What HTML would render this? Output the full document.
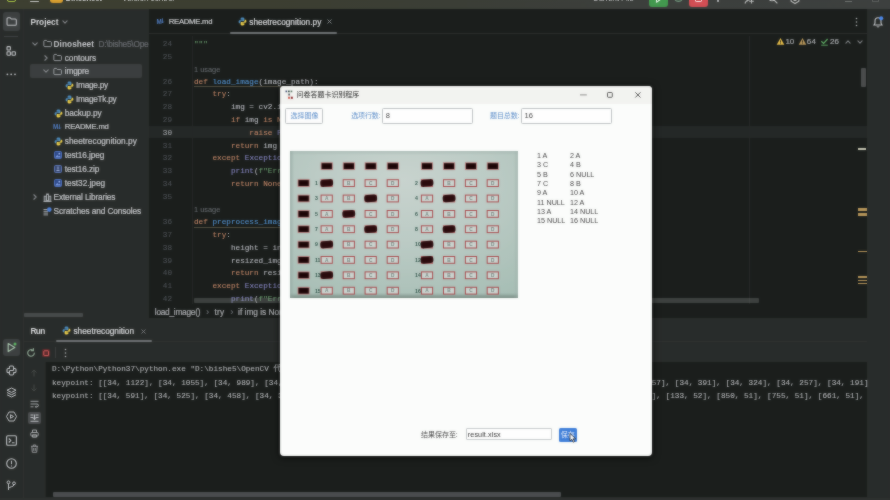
<!DOCTYPE html>
<html lang="zh"><head><meta charset="utf-8"><title>PyCharm</title>
<style>
*{box-sizing:border-box;margin:0;padding:0}
html,body{width:890px;height:500px;overflow:hidden;background:#1b1e1c;}
body{position:relative;font-family:"Liberation Sans","Noto Sans CJK SC",sans-serif;font-size:8.3px;color:#c9cbcd}
.abs{position:absolute}
.t{position:absolute;white-space:pre;line-height:12px;height:12px;-webkit-text-stroke:0.22px currentColor}
.mono{font-family:"Liberation Mono","Noto Sans CJK SC",monospace;font-size:7.7px;-webkit-text-stroke:0.08px currentColor}
svg{position:absolute;overflow:visible}
#root{position:absolute;left:0;top:0;width:890px;height:500px;overflow:hidden;background:#1b1e1c;filter:blur(0.5px)}
#soft{position:absolute;left:0;top:0;width:890px;height:500px;-webkit-backdrop-filter:blur(0.8px);backdrop-filter:blur(0.8px);opacity:0.5;pointer-events:none}
#topbar{left:0;top:0;width:890px;height:8.8px;background:linear-gradient(90deg,#3d3f31 0%,#3c3e31 30%,#3b3e36 50%,#3c3f3c 70%,#3d403f 100%);overflow:hidden}
#stripeL{left:0;top:8.6px;width:23px;height:491.4px;background:#292c2b}
#proj{left:23px;top:8.6px;width:126px;height:309.4px;background:#292c2b;overflow:hidden}
#editor{left:149px;top:8.6px;width:718px;height:309.4px;background:#1b1e1c;overflow:hidden}
#stripeR{left:867px;top:8.6px;width:23px;height:491.4px;background:#292c2b}
#run{left:23px;top:318px;width:844px;height:182px;background:#292c2b;overflow:hidden}
#console{left:46px;top:362px;width:821px;height:135px;background:#1b1e1c}
.kw{color:#c78a6a}.fn{color:#5596d6}.st{color:#6a9c6f}.cm{color:#666a6f}.ln{color:#4e5257}.bi{color:#8888c6}
</style></head>
<body>
<div id="root">
<div class="abs" id="stripeL"></div>
<div class="abs" id="proj"></div>
<div class="abs" id="editor"></div>
<div class="abs" id="run"></div>
<div class="abs" id="console"></div>
<div class="abs" id="stripeR"></div>
<div class="abs" id="topbar"></div>
<div class="abs" style="left:0;top:0;width:890px;height:8.8px;overflow:hidden"><div style="position:absolute;left:7px;top:-8px;width:9px;height:10px;border:1.3px solid #a6c044;border-radius:2px"></div><div style="position:absolute;left:29.5px;top:1.4px;width:9px;height:1.1px;background:#c4c6c4;border-radius:1px"></div><div style="position:absolute;left:50px;top:-8px;width:13px;height:11.4px;background:linear-gradient(180deg,#e8b040,#d49a2c);border-radius:3px"></div><div style="position:absolute;left:65.5px;top:-7.95px;line-height:12px;height:12px;white-space:pre;font-size:8.3px;font-weight:bold;color:#bfc1bf;letter-spacing:-0.457px">Dinosheet</div><div style="position:absolute;left:122px;top:-7.95px;line-height:12px;height:12px;white-space:pre;font-size:8.3px;font-weight:normal;color:#bfc1bf;letter-spacing:-0.193px">Version control</div><div style="position:absolute;left:592.6px;top:-7.95px;line-height:12px;height:12px;white-space:pre;font-size:8.3px;font-weight:normal;color:#b4b6b6;letter-spacing:-0.195px">Current File</div><div style="position:absolute;left:649.2px;top:-9px;width:18.4px;height:15.8px;background:#43994f;border-radius:3px"></div><svg style="left:655px;top:-4px" width="7" height="7"><path d="M1.5 0v6.200l4.500-3.100z" fill="none" stroke="#dff0e0" stroke-width="1.100" stroke-linejoin="round"/></svg><div style="position:absolute;left:673.5px;top:-6px;width:9px;height:8.300px;border:1.2px solid #6f8f78;border-radius:4.5px;background:#4a5f50"></div><div style="position:absolute;left:688.8px;top:-9px;width:18.9px;height:15.8px;background:#d24e54;border-radius:3px"></div><div style="position:absolute;left:694.5px;top:-5px;width:7.5px;height:7px;border:1.1px solid #f6e4e4;border-radius:1.2px"></div><div style="position:absolute;left:717px;top:0.3px;width:1.5px;height:1.5px;border-radius:1px;background:#c3c6c9"></div><svg style="left:744px;top:-6px" width="10" height="10"><g fill="none" stroke="#b8bab9" stroke-width="1.100"><circle cx="4" cy="4" r="2.200"/><path d="M1 9.500c.5-2 1.700-2.800 3-2.800M7.500 5v4.500M5.200 7.200h4.600"/></g></svg><svg style="left:768px;top:-6px" width="10" height="10"><g fill="none" stroke="#b8bab9" stroke-width="1.100" stroke-linecap="round"><circle cx="4" cy="3.800" r="3"/><path d="M6.200 6.200l2.800 2.800"/></g></svg><svg style="left:789.5px;top:-6.5px" width="10" height="10"><g fill="none" stroke="#b8bab9" stroke-width="1.100"><path d="M5 0.500l3.900 2.200v4.600L5 9.500 1.100 7.300V2.700z"/><circle cx="5" cy="5" r="1.500"/></g></svg><div style="position:absolute;left:845px;top:0.8px;width:7px;height:1px;background:#6e716f"></div><div style="position:absolute;left:872px;top:-4px;width:6.5px;height:6px;border:1px solid #5a5d5b"></div></div>
<div class="abs" style="left:2.7px;top:12.4px;width:17.5px;height:18.4px;background:#3d4041;border-radius:3px;"></div>
<svg style="left:5.9px;top:16.3px" width="11" height="11" viewBox="0 0 16 16"><path d="M1.500 4c0-.8.600-1.500 1.500-1.500h3l1.800 2h5.700c.8 0 1.500.7 1.500 1.500v6c0 .8-.7 1.500-1.500 1.500h-10.500c-.9 0-1.500-.7-1.500-1.500z" fill="none" stroke="#c3c6c9" stroke-width="1.500"/></svg>
<div class="abs" style="left:4px;top:36px;width:14px;height:1px;background:#3e4142;"></div>
<svg style="left:6px;top:46px" width="10" height="10" viewBox="0 0 10 10"><g fill="none" stroke="#c3c6c9" stroke-width="1.100"><rect x="1" y="0.600" width="3.400" height="3.400" rx="0.800"/><rect x="1" y="5.800" width="3.400" height="3.400" rx="0.800"/><rect x="6" y="5.800" width="3.400" height="3.400" rx="0.800"/></g></svg>
<svg style="left:6px;top:72px" width="10" height="4" viewBox="0 0 10 4"><g fill="#c3c6c9"><circle cx="1.400" cy="2.300" r="0.900"/><circle cx="5.200" cy="2.300" r="0.900"/><circle cx="9" cy="2.300" r="0.900"/></g></svg>
<div class="abs" style="left:23px;top:9px;width:1px;height:309px;background:#2c2f2e;"></div>
<div class="t" style="left:30.4px;top:16px;font-size:8.3px;font-weight:bold;-webkit-text-stroke:0;color:#d6d8da;letter-spacing:-0.02px;">Project</div>
<svg style="left:65.3px;top:22.3px" width="1" height="1"><path d="M-2.1 -1.05 L0 1.05 L2.1 -1.05" fill="none" stroke="#85888b" stroke-width="1.1" stroke-linecap="round" stroke-linejoin="round"/></svg>
<div class="abs" style="left:30.4px;top:64.4px;width:111.2px;height:13.6px;background:#3b3e3f;border-radius:2px;"></div>
<svg style="left:34.7px;top:43.6px" width="1" height="1"><path d="M-2.25 -1.125 L0 1.125 L2.25 -1.125" fill="none" stroke="#888b8f" stroke-width="1.1" stroke-linecap="round" stroke-linejoin="round"/></svg>
<svg style="left:42.7px;top:39.1px" width="9" height="9" viewBox="0 0 16 16"><path d="M1.500 4c0-.8.600-1.500 1.500-1.500h3l1.800 2h5.700c.8 0 1.500.7 1.500 1.500v6c0 .8-.7 1.500-1.500 1.500h-10.500c-.9 0-1.500-.7-1.500-1.500z" fill="none" stroke="#b0b4b8" stroke-width="1.500"/></svg>
<div class="t" style="left:53.6px;top:37.6px;font-size:8.3px;font-weight:bold;-webkit-text-stroke:0;color:#c3c5c8;letter-spacing:0.032px;">Dinosheet</div>
<svg style="left:45.6px;top:57.5px" width="1" height="1"><path d="M-1.125 -2.25 L1.125 0 L-1.125 2.25" fill="none" stroke="#888b8f" stroke-width="1.1" stroke-linecap="round" stroke-linejoin="round"/></svg>
<svg style="left:53.3px;top:53.0px" width="9" height="9" viewBox="0 0 16 16"><path d="M1.500 4c0-.8.600-1.500 1.500-1.500h3l1.800 2h5.700c.8 0 1.500.7 1.500 1.500v6c0 .8-.7 1.500-1.500 1.500h-10.500c-.9 0-1.500-.7-1.500-1.500z" fill="none" stroke="#b0b4b8" stroke-width="1.500"/></svg>
<div class="t" style="left:64.8px;top:51.5px;font-size:8.3px;color:#c3c5c8;letter-spacing:-0.079px;">contours</div>
<svg style="left:45.6px;top:71.1px" width="1" height="1"><path d="M-2.25 -1.125 L0 1.125 L2.25 -1.125" fill="none" stroke="#888b8f" stroke-width="1.1" stroke-linecap="round" stroke-linejoin="round"/></svg>
<svg style="left:53.3px;top:66.6px" width="9" height="9" viewBox="0 0 16 16"><path d="M1.500 4c0-.8.600-1.500 1.500-1.500h3l1.800 2h5.700c.8 0 1.500.7 1.500 1.500v6c0 .8-.7 1.500-1.500 1.500h-10.500c-.9 0-1.500-.7-1.500-1.500z" fill="none" stroke="#b0b4b8" stroke-width="1.500"/></svg>
<div class="t" style="left:64.8px;top:65.1px;font-size:8.3px;color:#c3c5c8;letter-spacing:-0.196px;">imgpre</div>
<svg style="left:64.9px;top:80.7px" width="9" height="9" viewBox="0 0 16 16"><path d="M7.8 1C5 1 4.6 2.2 4.6 3.2V5h3.6v.7H3C1.6 5.7 1 6.9 1 8.3c0 1.500.6 2.700 2 2.700h1.200V9.200c0-1.200 1-2.100 2.200-2.100h3.300c1 0 1.700-.8 1.700-1.800V3.200C11.400 1.800 10 1 7.800 1z" fill="#4b8bbe"/><path d="M8.200 15c2.800 0 3.200-1.200 3.200-2.200V11H7.800v-.7H13c1.400 0 2-1.200 2-2.600 0-1.500-.6-2.700-2-2.700h-1.200v1.800c0 1.200-1 2.100-2.200 2.100H6.300c-1 0-1.700.8-1.700 1.800v2.100C4.600 14.200 6 15 8.200 15z" fill="#f0d24a"/></svg>
<div class="t" style="left:76px;top:79.2px;font-size:8.3px;color:#c3c5c8;letter-spacing:-0.268px;">Image.py</div>
<svg style="left:64.9px;top:94.7px" width="9" height="9" viewBox="0 0 16 16"><path d="M7.8 1C5 1 4.6 2.2 4.6 3.2V5h3.6v.7H3C1.6 5.7 1 6.9 1 8.3c0 1.500.6 2.700 2 2.700h1.200V9.200c0-1.200 1-2.100 2.200-2.100h3.300c1 0 1.700-.8 1.700-1.800V3.200C11.400 1.800 10 1 7.800 1z" fill="#4b8bbe"/><path d="M8.200 15c2.800 0 3.200-1.200 3.200-2.200V11H7.800v-.7H13c1.400 0 2-1.200 2-2.600 0-1.500-.6-2.700-2-2.700h-1.200v1.800c0 1.200-1 2.100-2.200 2.100H6.300c-1 0-1.700.8-1.700 1.800v2.100C4.600 14.200 6 15 8.200 15z" fill="#f0d24a"/></svg>
<div class="t" style="left:76px;top:93.2px;font-size:8.3px;color:#c3c5c8;letter-spacing:-0.306px;">ImageTk.py</div>
<svg style="left:53.7px;top:108.7px" width="9" height="9" viewBox="0 0 16 16"><path d="M7.8 1C5 1 4.6 2.2 4.6 3.2V5h3.6v.7H3C1.6 5.7 1 6.9 1 8.3c0 1.500.6 2.700 2 2.700h1.200V9.200c0-1.200 1-2.100 2.200-2.100h3.300c1 0 1.700-.8 1.700-1.800V3.200C11.400 1.800 10 1 7.800 1z" fill="#4b8bbe"/><path d="M8.200 15c2.800 0 3.200-1.200 3.200-2.200V11H7.800v-.7H13c1.400 0 2-1.200 2-2.600 0-1.500-.6-2.700-2-2.700h-1.200v1.800c0 1.200-1 2.100-2.200 2.100H6.300c-1 0-1.700.8-1.700 1.800v2.100C4.600 14.200 6 15 8.200 15z" fill="#f0d24a"/></svg>
<div class="t" style="left:64.8px;top:107.2px;font-size:8.3px;color:#c3c5c8;letter-spacing:-0.114px;">backup.py</div>
<div class="t" style="left:53.0px;top:121.2px;font-size:6.3px;font-weight:bold;-webkit-text-stroke:0;color:#4f7cc0;">M</div>
<svg style="left:57.7px;top:124.10000000000001px" width="3" height="6" viewBox="0 0 3 6"><path d="M1.5 0.3v4.6M0.2 3.5l1.300 1.500 1.300-1.500" fill="none" stroke="#4f7cc0" stroke-width="0.800"/></svg>
<div class="t" style="left:64.8px;top:121.2px;font-size:7.7px;color:#c3c5c8;letter-spacing:-0.202px;">README.md</div>
<svg style="left:53.7px;top:136.7px" width="9" height="9" viewBox="0 0 16 16"><path d="M7.8 1C5 1 4.6 2.2 4.6 3.2V5h3.6v.7H3C1.6 5.7 1 6.9 1 8.3c0 1.500.6 2.700 2 2.700h1.200V9.200c0-1.200 1-2.100 2.200-2.100h3.300c1 0 1.700-.8 1.700-1.800V3.200C11.400 1.800 10 1 7.800 1z" fill="#4b8bbe"/><path d="M8.200 15c2.800 0 3.200-1.200 3.200-2.200V11H7.800v-.7H13c1.400 0 2-1.200 2-2.600 0-1.500-.6-2.700-2-2.700h-1.200v1.800c0 1.200-1 2.100-2.200 2.100H6.300c-1 0-1.700.8-1.700 1.800v2.100C4.600 14.200 6 15 8.200 15z" fill="#f0d24a"/></svg>
<div class="t" style="left:64.8px;top:135.2px;font-size:8.3px;color:#c3c5c8;letter-spacing:0.002px;">sheetrecognition.py</div>
<svg style="left:54.2px;top:151.2px" width="8" height="8" viewBox="0 0 8 8"><rect x="0.500" y="0.500" width="7" height="7" rx="1" fill="#2f4a8a" stroke="#4f74c8" stroke-width="0.900"/><circle cx="5.300" cy="2.700" r="0.900" fill="#9db6ee"/><path d="M1 6.500l2.200-2.500 1.600 1.600 1-.8 1.200 1.700z" fill="#7d9be0"/></svg>
<div class="t" style="left:64.8px;top:149.2px;font-size:8.3px;color:#c3c5c8;letter-spacing:-0.109px;">test16.jpeg</div>
<svg style="left:54.2px;top:165.2px" width="8" height="8" viewBox="0 0 8 8"><rect x="0.500" y="0.500" width="7" height="7" rx="1" fill="#3a4a72" stroke="#5f7cc0" stroke-width="0.900"/><path d="M4 1.500v3M2.500 5.500h3" stroke="#a8b8e0" stroke-width="0.900" fill="none"/></svg>
<div class="t" style="left:64.8px;top:163.2px;font-size:8.3px;color:#c3c5c8;letter-spacing:-0.092px;">test16.zip</div>
<svg style="left:54.2px;top:179.2px" width="8" height="8" viewBox="0 0 8 8"><rect x="0.500" y="0.500" width="7" height="7" rx="1" fill="#2f4a8a" stroke="#4f74c8" stroke-width="0.900"/><circle cx="5.300" cy="2.700" r="0.900" fill="#9db6ee"/><path d="M1 6.500l2.200-2.500 1.600 1.600 1-.8 1.200 1.700z" fill="#7d9be0"/></svg>
<div class="t" style="left:64.8px;top:177.2px;font-size:8.3px;color:#c3c5c8;letter-spacing:-0.027px;">test32.jpeg</div>
<svg style="left:34.7px;top:197.2px" width="1" height="1"><path d="M-1.125 -2.25 L1.125 0 L-1.125 2.25" fill="none" stroke="#888b8f" stroke-width="1.1" stroke-linecap="round" stroke-linejoin="round"/></svg>
<svg style="left:42.7px;top:192.7px" width="9" height="9" viewBox="0 0 9 9"><g fill="none" stroke="#b0b4b8" stroke-width="0.900"><path d="M0.500 8.500h8"/><rect x="1.200" y="3.200" width="1.800" height="5"/><rect x="3.600" y="1" width="1.800" height="7.200"/><rect x="6" y="3.200" width="1.800" height="5"/></g></svg>
<div class="t" style="left:53.6px;top:191.2px;font-size:8.3px;color:#c3c5c8;letter-spacing:-0.159px;">External Libraries</div>
<svg style="left:42.7px;top:206.7px" width="9" height="9" viewBox="0 0 9 9"><g><path d="M0.500 2.500h4.500M0.500 4.300h4.500M0.500 6.100h4.500M0.500 7.900h4.500" stroke="#a0a4a8" stroke-width="1"/><circle cx="6.300" cy="2.600" r="2.300" fill="#4c7fd6"/></g></svg>
<div class="t" style="left:53.6px;top:205.2px;font-size:8.3px;color:#c3c5c8;letter-spacing:-0.111px;">Scratches and Consoles</div>
<div class="t" style="left:98.4px;top:37.6px;font-size:8.3px;color:#686c70;letter-spacing:-0.234px;">D:\bishe5\Ope</div>
<div class="abs" style="left:149px;top:9px;width:10px;height:60px;background:#1b1e1c;"></div>
<div class="abs" style="left:24px;top:312.6px;width:59px;height:4.2px;background:#474a4b;border-radius:1px;"></div>
<div class="t" style="left:156.6px;top:15.5px;font-size:6.3px;font-weight:bold;-webkit-text-stroke:0;color:#4f7cc0;">M</div>
<svg style="left:161.3px;top:18.4px" width="3" height="6" viewBox="0 0 3 6"><path d="M1.5 0.3v4.6M0.2 3.5l1.300 1.500 1.300-1.500" fill="none" stroke="#4f7cc0" stroke-width="0.800"/></svg>
<div class="t" style="left:168.7px;top:15.5px;font-size:7.7px;color:#c9cbcd;letter-spacing:-0.235px;">README.md</div>
<svg style="left:238.0px;top:16.8px" width="9" height="9" viewBox="0 0 16 16"><path d="M7.8 1C5 1 4.6 2.2 4.6 3.2V5h3.6v.7H3C1.6 5.7 1 6.9 1 8.3c0 1.500.6 2.700 2 2.700h1.200V9.200c0-1.200 1-2.100 2.200-2.100h3.300c1 0 1.700-.8 1.700-1.800V3.200C11.400 1.800 10 1 7.800 1z" fill="#4b8bbe"/><path d="M8.200 15c2.800 0 3.200-1.200 3.200-2.200V11H7.800v-.7H13c1.400 0 2-1.200 2-2.600 0-1.500-.6-2.700-2-2.700h-1.200v1.800c0 1.200-1 2.100-2.200 2.100H6.300c-1 0-1.700.8-1.700 1.800v2.100C4.600 14.200 6 15 8.200 15z" fill="#f0d24a"/></svg>
<div class="t" style="left:249.3px;top:15.5px;font-size:8.3px;color:#d6d8da;letter-spacing:0.002px;">sheetrecognition.py</div>
<svg style="left:326.5px;top:19px" width="5" height="5" viewBox="0 0 5 5"><path d="M0.500 0.500l4 4M4.500 0.500l-4 4" stroke="#8b8e92" stroke-width="0.900" fill="none"/></svg>
<div class="abs" style="left:149px;top:32.6px;width:718px;height:1px;background:#2a2d2c;"></div>
<div class="abs" style="left:230px;top:31.6px;width:107px;height:2.2px;background:#6f7275;border-radius:1px;"></div>
<div class="abs" style="left:149px;top:126px;width:718px;height:12.4px;background:#242827;"></div>
<div class="abs" style="left:192px;top:36px;width:1px;height:268px;background:#242726;"></div>
<div class="abs" style="left:749px;top:36px;width:1px;height:268px;background:#262928;"></div>
<div class="t mono ln" style="left:150px;width:22px;text-align:right;top:38.11px;">24</div>
<div class="t mono" style="left:194px;top:38.11px;color:#bcbec4"><span class="st">"""</span></div>
<div class="t mono ln" style="left:150px;width:22px;text-align:right;top:50.74px;">25</div>
<div class="t mono" style="left:194px;top:63.82px;color:#bcbec4"><span class="cm" style="font-family:'Liberation Sans',sans-serif;font-size:7.4px">1 usage</span></div>
<div class="t mono ln" style="left:150px;width:22px;text-align:right;top:75.60px;">26</div>
<div class="t mono" style="left:194px;top:75.60px;color:#bcbec4"><span class="kw">def</span> <span class="fn">load_image</span>(image_path):</div>
<div class="t mono ln" style="left:150px;width:22px;text-align:right;top:88.38px;">27</div>
<div class="t mono" style="left:194px;top:88.38px;color:#bcbec4">    <span class="kw">try</span>:</div>
<div class="t mono ln" style="left:150px;width:22px;text-align:right;top:101.16px;">28</div>
<div class="t mono" style="left:194px;top:101.16px;color:#bcbec4">        img = cv2.imread(image_path)</div>
<div class="t mono ln" style="left:150px;width:22px;text-align:right;top:113.94px;">29</div>
<div class="t mono" style="left:194px;top:113.94px;color:#bcbec4">        <span class="kw">if</span> img <span class="kw">is</span> <span class="kw">None</span>:</div>
<div class="t mono ln" style="left:150px;width:22px;text-align:right;top:126.72px;color:#a3a6aa">30</div>
<div class="t mono" style="left:194px;top:126.72px;color:#bcbec4">            <span class="kw">raise</span> <span class="bi">FileNotFoundError</span></div>
<div class="t mono ln" style="left:150px;width:22px;text-align:right;top:139.50px;">31</div>
<div class="t mono" style="left:194px;top:139.50px;color:#bcbec4">        <span class="kw">return</span> img</div>
<div class="t mono ln" style="left:150px;width:22px;text-align:right;top:152.28px;">32</div>
<div class="t mono" style="left:194px;top:152.28px;color:#bcbec4">    <span class="kw">except</span> <span class="bi">Exception</span> <span class="kw">as</span> e:</div>
<div class="t mono ln" style="left:150px;width:22px;text-align:right;top:165.06px;">33</div>
<div class="t mono" style="left:194px;top:165.06px;color:#bcbec4">        <span class="bi">print</span>(<span class="st">f"Error loading image: </span></div>
<div class="t mono ln" style="left:150px;width:22px;text-align:right;top:177.84px;">34</div>
<div class="t mono" style="left:194px;top:177.84px;color:#bcbec4">        <span class="kw">return</span> <span class="kw">None</span></div>
<div class="t mono ln" style="left:150px;width:22px;text-align:right;top:190.62px;">35</div>
<div class="t mono" style="left:194px;top:203.80px;color:#bcbec4"><span class="cm" style="font-family:'Liberation Sans',sans-serif;font-size:7.4px">1 usage</span></div>
<div class="t mono ln" style="left:150px;width:22px;text-align:right;top:216.18px;">36</div>
<div class="t mono" style="left:194px;top:216.18px;color:#bcbec4"><span class="kw">def</span> <span class="fn">preprocess_image</span>(image):</div>
<div class="t mono ln" style="left:150px;width:22px;text-align:right;top:228.96px;">37</div>
<div class="t mono" style="left:194px;top:228.96px;color:#bcbec4">    <span class="kw">try</span>:</div>
<div class="t mono ln" style="left:150px;width:22px;text-align:right;top:241.74px;">38</div>
<div class="t mono" style="left:194px;top:241.74px;color:#bcbec4">        height = int(image.shape[0])</div>
<div class="t mono ln" style="left:150px;width:22px;text-align:right;top:254.52px;">39</div>
<div class="t mono" style="left:194px;top:254.52px;color:#bcbec4">        resized_img = cv2.resize(image)</div>
<div class="t mono ln" style="left:150px;width:22px;text-align:right;top:267.30px;">40</div>
<div class="t mono" style="left:194px;top:267.30px;color:#bcbec4">        <span class="kw">return</span> resized_img</div>
<div class="t mono ln" style="left:150px;width:22px;text-align:right;top:280.08px;">41</div>
<div class="t mono" style="left:194px;top:280.08px;color:#bcbec4">    <span class="kw">except</span> <span class="bi">Exception</span> <span class="kw">as</span> e:</div>
<div class="t mono ln" style="left:150px;width:22px;text-align:right;top:292.86px;">42</div>
<div class="t mono" style="left:194px;top:292.86px;color:#bcbec4">        <span class="bi">print</span>(<span class="st">f"Error preprocessing</span></div>
<div class="abs" style="left:194px;top:86.2px;width:124.5px;height:0.8px;background:rgba(150,140,110,0.45);"></div>
<div class="abs" style="left:194px;top:226.8px;width:120px;height:0.8px;background:rgba(150,140,110,0.45);"></div>
<div class="abs" style="left:149px;top:304px;width:718px;height:14px;background:#1b1e1c;"></div>
<div class="t" style="left:154.8px;top:305.7px;font-size:8.3px;color:#a9abae;letter-spacing:-0.253px;">load_image()</div>
<div class="t" style="left:206.3px;top:305.5px;font-size:8.3px;color:#6f7378;">›</div>
<div class="t" style="left:214.5px;top:305.7px;font-size:8.3px;color:#a9abae;letter-spacing:0.16px;">try</div>
<div class="t" style="left:230.6px;top:305.5px;font-size:8.3px;color:#6f7378;">›</div>
<div class="t" style="left:238.1px;top:305.7px;font-size:8.3px;color:#a9abae;">if img is None</div>
<div class="abs" style="left:194px;top:298px;width:564.5px;height:5.2px;background:rgba(150,158,155,0.28);border-radius:1px;"></div>
<div class="abs" style="left:861px;top:68px;width:5px;height:19px;background:#4a4d4d;border-radius:1px;"></div>
<svg style="left:776px;top:37.3px" width="9" height="9" viewBox="0 0 9 9"><path d="M4.500 1L8.300 7.800H0.700z" fill="#e8bf4a"/><path d="M4.500 3.400v2.300M4.500 6.400v.7" stroke="#2a2a1e" stroke-width="0.900"/></svg>
<div class="t" style="left:785.6px;top:36px;font-size:8px;color:#a6a9ac;letter-spacing:-0.353px;">10</div>
<svg style="left:797.5px;top:37.3px" width="9" height="9" viewBox="0 0 9 9"><path d="M4.500 1L8.300 7.800H0.700z" fill="#b9975a"/><path d="M4.500 3.400v2.300M4.500 6.400v.7" stroke="#2a2a1e" stroke-width="0.900"/></svg>
<div class="t" style="left:806.8px;top:36px;font-size:8px;color:#a6a9ac;letter-spacing:0.147px;">64</div>
<svg style="left:820px;top:37px" width="9" height="9" viewBox="0 0 9 9"><path d="M1.300 4.300l2.300 2.200 4-4.500" stroke="#5fad65" stroke-width="1.200" fill="none"/><path d="M1.200 8.200h6.600" stroke="#5fad65" stroke-width="0.900"/></svg>
<div class="t" style="left:830px;top:36px;font-size:8px;color:#a6a9ac;letter-spacing:0.147px;">26</div>
<svg style="left:847.5px;top:41.8px" width="1" height="1"><path d="M-2.1 1.05 L0 -1.05 L2.1 1.05" fill="none" stroke="#808386" stroke-width="1.1" stroke-linecap="round" stroke-linejoin="round"/></svg>
<svg style="left:860px;top:41.8px" width="1" height="1"><path d="M-2.1 -1.05 L0 1.05 L2.1 -1.05" fill="none" stroke="#808386" stroke-width="1.1" stroke-linecap="round" stroke-linejoin="round"/></svg>
<svg style="left:854.5px;top:16.5px" width="3" height="10" viewBox="0 0 3 10"><g fill="#b0b3b6"><circle cx="1.500" cy="1.500" r="0.800"/><circle cx="1.500" cy="5" r="0.800"/><circle cx="1.500" cy="8.500" r="0.800"/></g></svg>
<div class="abs" style="left:858px;top:208.4px;width:9px;height:2.6px;background:#b9975a;"></div>
<div class="abs" style="left:858px;top:212.8px;width:9px;height:3px;background:#b9975a;"></div>
<div class="abs" style="left:858px;top:250.8px;width:9px;height:1.3px;background:#b9975a;"></div>
<div class="abs" style="left:858px;top:276.4px;width:9px;height:1.3px;background:#b9975a;"></div>
<div class="abs" style="left:858px;top:279.6px;width:9px;height:1.3px;background:#b9975a;"></div>
<div class="abs" style="left:858px;top:282.8px;width:9px;height:1.3px;background:#b9975a;"></div>
<div class="abs" style="left:858px;top:148.4px;width:8.4px;height:1.3px;background:#c9c8b4;"></div>
<svg style="left:873px;top:16px" width="11" height="12" viewBox="0 0 11 12"><path d="M5 1.800c-1.900 0-3 1.400-3 3.200v2.200L1 9h8L8 7.200V5c0-1.800-1.100-3.200-3-3.200z" fill="none" stroke="#c3c6c9" stroke-width="1.100"/><path d="M4 10.300c.2.600.6.900 1 .900s.8-.3 1-.9" fill="none" stroke="#c3c6c9" stroke-width="1"/><circle cx="8.200" cy="2.300" r="2" fill="#4c8bf0"/></svg>
<div class="abs" style="left:23px;top:340.8px;width:844px;height:1px;background:#2f3231;"></div>
<div class="t" style="left:30.5px;top:324.5px;font-size:8.3px;font-weight:bold;-webkit-text-stroke:0;color:#d6d8da;letter-spacing:-0.714px;">Run</div>
<svg style="left:62.3px;top:325.8px" width="9" height="9" viewBox="0 0 16 16"><path d="M7.8 1C5 1 4.6 2.2 4.6 3.2V5h3.6v.7H3C1.6 5.7 1 6.9 1 8.3c0 1.500.6 2.700 2 2.700h1.200V9.200c0-1.200 1-2.100 2.200-2.100h3.300c1 0 1.700-.8 1.700-1.800V3.200C11.400 1.800 10 1 7.800 1z" fill="#4b8bbe"/><path d="M8.200 15c2.800 0 3.200-1.200 3.200-2.200V11H7.800v-.7H13c1.400 0 2-1.200 2-2.600 0-1.500-.6-2.700-2-2.700h-1.200v1.800c0 1.200-1 2.100-2.200 2.100H6.300c-1 0-1.700.8-1.700 1.800v2.100C4.600 14.200 6 15 8.200 15z" fill="#f0d24a"/></svg>
<div class="t" style="left:73.5px;top:324.5px;font-size:8.3px;color:#d6d8da;letter-spacing:-0.024px;">sheetrecognition</div>
<svg style="left:140.5px;top:328.5px" width="5" height="5" viewBox="0 0 5 5"><path d="M0.5 0.5l4 4M4.5 0.5l-4 4" stroke="#7b7e82" stroke-width="0.9" fill="none"/></svg>
<div class="abs" style="left:55.7px;top:340px;width:96px;height:2px;background:#6f7275;border-radius:1px;"></div>
<div class="abs" style="left:2.7px;top:338.8px;width:17.5px;height:17.2px;background:#3d4041;border-radius:3px;"></div>
<svg style="left:6px;top:342px" width="11" height="11" viewBox="0 0 11 11"><path d="M2.2 1.6v8l6.600-4z" fill="none" stroke="#a9c4ad" stroke-width="1.200" stroke-linejoin="round"/><circle cx="9" cy="2" r="1.500" fill="#5fb865"/></svg>
<svg style="left:6px;top:364.6px" width="11" height="11" viewBox="0 0 11 11"><g fill="none" stroke="#c3c6c9" stroke-width="1.05" stroke-linejoin="round" stroke-linecap="round"><path d="M3.4 2.2Q3.4 1 4.6 1H6.4Q7.6 1 7.6 2.2V3.4H8.8Q10 3.4 10 4.6V6.4Q10 7.6 8.8 7.6H7.6V8.8Q7.6 10 6.4 10H4.6Q3.4 10 3.4 8.8V7.6H2.2Q1 7.6 1 6.4V4.6Q1 3.4 2.2 3.4H3.4Z"/><path d="M3.4 7.6V6.5Q3.4 5.5 4.4 5.5H6.6Q7.6 5.5 7.6 4.5V3.4"/></g></svg>
<svg style="left:6px;top:387.4px" width="11" height="11" viewBox="0 0 11 11"><g fill="none" stroke="#c3c6c9" stroke-width="1" stroke-linejoin="round"><path d="M5.500 1L10 3.200 5.500 5.400 1 3.200z"/><path d="M1 5.500l4.500 2.200L10 5.500"/><path d="M1 7.800L5.500 10 10 7.800"/></g></svg>
<svg style="left:6px;top:411px" width="11" height="11" viewBox="0 0 11 11"><g fill="none" stroke="#c3c6c9" stroke-width="1" stroke-linejoin="round"><path d="M3 1h5l2.500 4.500L8 10H3L0.500 5.500z"/><path d="M4.500 3.700v3.600l3-1.800z"/></g></svg>
<svg style="left:6px;top:434.5px" width="11" height="11" viewBox="0 0 11 11"><g fill="none" stroke="#c3c6c9" stroke-width="1.100" stroke-linejoin="round"><rect x="0.600" y="0.800" width="9.800" height="9.400" rx="1.300"/><path d="M2.800 3.500l2 2-2 2M6 7.700h2.500"/></g></svg>
<svg style="left:6px;top:457.5px" width="11" height="11" viewBox="0 0 11 11"><g fill="none" stroke="#c3c6c9" stroke-width="1.100"><circle cx="5.500" cy="5.500" r="4.800"/><path d="M5.500 2.800v3.400M5.500 7.500v1"/></g></svg>
<svg style="left:6px;top:480.2px" width="11" height="11" viewBox="0 0 11 11"><g fill="none" stroke="#c3c6c9" stroke-width="1"><circle cx="2.500" cy="2.300" r="1.400"/><circle cx="8" cy="3.300" r="1.400"/><path d="M2.500 3.700v6.300M8 4.700c0 2.500-5.500 1.800-5.500 4"/></g></svg>
<div class="abs" style="left:23px;top:318px;width:1px;height:182px;background:#2e3130;"></div>
<svg style="left:25.6px;top:347.6px" width="10" height="10" viewBox="0 0 10 10"><g fill="none" stroke="#8fa894" stroke-width="1.200" stroke-linecap="round"><path d="M8.300 5a3.300 3.300 0 1 1-1.200-2.600"/><path d="M7.400 0.700v2h-2" stroke-linejoin="round"/></g></svg>
<div class="abs" style="left:42px;top:348.6px;width:8.4px;height:8.4px;background:#5a2a2c;border-radius:1.5px;"></div>
<svg style="left:42px;top:348.6px" width="8.4" height="8.4" viewBox="0 0 8.4 8.4"><rect x="1.800" y="1.800" width="4.800" height="4.800" rx="0.600" fill="none" stroke="#d8605e" stroke-width="1"/></svg>
<div class="abs" style="left:55.3px;top:347px;width:1px;height:11px;background:#3a3d3d;"></div>
<svg style="left:63.5px;top:347.5px" width="3" height="10" viewBox="0 0 3 10"><g fill="#b0b3b6"><circle cx="1.500" cy="1.500" r="0.800"/><circle cx="1.500" cy="5" r="0.800"/><circle cx="1.500" cy="8.500" r="0.800"/></g></svg>
<svg style="left:30.3px;top:368.7px" width="8" height="8" viewBox="0 0 8 8"><path d="M4 7.500v-6.500M1.500 3.500l2.500-2.500 2.500 2.500" fill="none" stroke="#454847" stroke-width="1" stroke-linejoin="round"/></svg>
<svg style="left:30.3px;top:383.7px" width="8" height="8" viewBox="0 0 8 8"><path d="M4 0.500v6.500M1.500 4.500l2.500 2.500 2.500-2.500" fill="none" stroke="#454847" stroke-width="1" stroke-linejoin="round"/></svg>
<svg style="left:29.8px;top:399.5px" width="9" height="8" viewBox="0 0 9 8"><g fill="none" stroke="#b0b3b6" stroke-width="0.900"><path d="M0.500 1.300h8M0.500 4h6.500a1.400 1.400 0 0 1 0 2.800h-1.500M0.500 6.800h3"/><path d="M6.300 5.800l-1 1 1 1"/></g></svg>
<div class="abs" style="left:28px;top:411.6px;width:13px;height:12.7px;background:#4a4d4e;border-radius:2px;"></div>
<svg style="left:29.8px;top:414px" width="9" height="8" viewBox="0 0 9 8"><g fill="none" stroke="#c9cccf" stroke-width="0.900"><path d="M0.500 1h3M5.500 1h3M0.500 3.500h3M5.500 3.500h3M0.500 7.300h8M4.500 0.500v5M3 4.200l1.500 1.500 1.500-1.500"/></g></svg>
<svg style="left:29.8px;top:429px" width="9" height="9" viewBox="0 0 9 9"><g fill="none" stroke="#b0b3b6" stroke-width="0.900" stroke-linejoin="round"><path d="M2.500 3.500v-2.500h4v2.500"/><rect x="0.800" y="3.500" width="7.400" height="3.500" rx="0.800"/><path d="M2.500 5.800h4v2.400h-4z"/></g></svg>
<svg style="left:29.8px;top:443.8px" width="9" height="9" viewBox="0 0 9 9"><g fill="none" stroke="#a0a3a6" stroke-width="0.900" stroke-linejoin="round"><path d="M1 2.300h7M3.300 2.300v-1.300h2.400v1.300M1.800 2.300l.5 6h4.400l.5-6M3.700 4v2.800M5.300 4v2.800"/></g></svg>
<div class="abs" style="left:45px;top:362px;width:1px;height:135px;background:#252827;"></div>
<div class="t mono" style="left:52px;top:363.3px;color:#b8babd">D:\Python\Python37\python.exe "D:\bishe5\OpenCV 代码\Dinosheet\sheetrecognition.py"</div>
<div class="t mono" style="left:52px;top:376.6px;color:#b8babd">keypoint: [[34, 1122], [34, 1055], [34, 989], [34, 922], [34, 1856], [34, 790], [34, 723], [34, 657], [34, 591], [34, 525], [34, 457], [34, 391], [34, 324], [34, 257], [34, 191]</div>
<div class="t mono" style="left:52px;top:389.6px;color:#b8babd">keypoint: [[34, 591], [34, 525], [34, 458], [34, 391], [34, 324], [34, 257], [34, 191], [34, 124], [134, 57], [1229, 52], [133, 52], [133, 52], [850, 51], [755, 51], [661, 51],</div>
<div class="abs" style="left:52.7px;top:492px;width:508px;height:5px;background:#4a4d4e;border-radius:1px;"></div>
<div class="abs" style="left:0px;top:497.5px;width:890px;height:2.5px;background:#2d302f;"></div>
<div class="abs" id="dlg" style="left:280.2px;top:86.4px;width:371.6px;height:369.8px;background:#fbfcfb;border-radius:4px;box-shadow:0 1px 7px 1px rgba(0,0,0,0.55)"></div>
<div class="abs" style="left:280.2px;top:86.4px;width:371.6px;height:17.2px;background:#f2f3f0;border-radius:4px 4px 0 0;"></div>
<svg style="left:284.9px;top:90.3px" width="9" height="9.5" viewBox="0 0 8 8.5"><g><rect x="0.4" y="0.5" width="1.5" height="1.5" fill="#3c4a6e"/><rect x="2.7" y="0.5" width="1.5" height="1.5" fill="#2e4a3e"/><rect x="5" y="0.5" width="1.5" height="1.5" fill="#55705f"/><rect x="2.9" y="3.2" width="1.5" height="1.7" fill="#4c5258"/><rect x="2.7" y="6" width="1.7" height="1.9" fill="#cf5a4e"/><rect x="5.2" y="6" width="1.8" height="1.9" fill="#8c2a2c"/></g></svg>
<div class="t" style="left:296.6px;top:88.8px;font-size:7px;color:#2a2a2a;font-family:'Liberation Sans','Noto Sans CJK SC',sans-serif;letter-spacing:-0.033px;-webkit-text-stroke:0;">问卷答题卡识别程序</div>
<svg style="left:579.8px;top:92px" width="7" height="6" viewBox="0 0 7 6"><path d="M0 2.900h6.800" stroke="#444" stroke-width="0.600"/></svg>
<svg style="left:607.2px;top:92.1px" width="6" height="6" viewBox="0 0 6 6"><rect x="0.500" y="0.500" width="4.800" height="4.800" rx="0.800" fill="none" stroke="#333" stroke-width="0.800"/></svg>
<svg style="left:634.6px;top:92.1px" width="6" height="6" viewBox="0 0 6 6"><path d="M0.300 0.300l5.200 5.200M5.500 0.300l-5.200 5.200" stroke="#333" stroke-width="0.800" fill="none"/></svg>
<div class="abs" style="left:285.2px;top:108.2px;width:38.2px;height:15.7px;background:#fdfdfd;border-radius:1.5px;border:1px solid #bcc1c2;"></div>
<div class="t" style="left:290.5px;top:110px;font-size:7px;color:#5e8fca;font-family:'Liberation Sans','Noto Sans CJK SC',sans-serif;letter-spacing:0.0px;-webkit-text-stroke:0;">选择图像</div>
<div class="t" style="left:351.2px;top:110px;font-size:7px;color:#5e8fca;font-family:'Liberation Sans','Noto Sans CJK SC',sans-serif;letter-spacing:-0.111px;-webkit-text-stroke:0;">选项行数:</div>
<div class="abs" style="left:382.2px;top:108.2px;width:90.4px;height:15.7px;background:#fefefe;border-radius:1.5px;border:1px solid #bcc1c2;"></div>
<div class="t" style="left:385.8px;top:110.2px;font-size:7.5px;color:#444;-webkit-text-stroke:0;">8</div>
<div class="t" style="left:490px;top:110px;font-size:7px;color:#5e8fca;font-family:'Liberation Sans','Noto Sans CJK SC',sans-serif;letter-spacing:-0.111px;-webkit-text-stroke:0;">题目总数:</div>
<div class="abs" style="left:521.2px;top:108.2px;width:90.6px;height:15.7px;background:#fefefe;border-radius:1.5px;border:1px solid #bcc1c2;"></div>
<div class="t" style="left:524.6px;top:110.2px;font-size:7.5px;color:#444;-webkit-text-stroke:0;">16</div>
<svg style="left:290.1px;top:151px;overflow:hidden" width="227.9" height="147.3" viewBox="0 0 227.9 147.3"><defs><radialGradient id="shg" cx="0.5" cy="0.25" r="0.85" fx="0.5" fy="0.2"><stop offset="0" stop-color="#c8d3ce"/><stop offset="0.450" stop-color="#bccbc5"/><stop offset="1" stop-color="#a7beb5"/></radialGradient><linearGradient id="shv" x1="0" y1="0" x2="0" y2="1"><stop offset="0" stop-color="#8fa39c" stop-opacity="0.450"/><stop offset="0.030" stop-color="#a8b8b4" stop-opacity="0"/><stop offset="0.960" stop-color="#8a9e96" stop-opacity="0"/><stop offset="1" stop-color="#55685f" stop-opacity="0.750"/></linearGradient><linearGradient id="shh" x1="0" y1="0" x2="1" y2="0"><stop offset="0" stop-color="#7f958d" stop-opacity="0.600"/><stop offset="0.020" stop-color="#a8b8b4" stop-opacity="0"/><stop offset="0.980" stop-color="#a8b8b4" stop-opacity="0"/><stop offset="1" stop-color="#8fa39c" stop-opacity="0.500"/></linearGradient></defs><rect x="0" y="0" width="227.9" height="147.3" fill="url(#shg)"/><rect x="0" y="0" width="227.9" height="147.3" fill="url(#shv)"/><rect x="0" y="0" width="227.9" height="147.3" fill="url(#shh)"/><rect x="31.10" y="11.80" width="11.200" height="6.800" fill="#1c0506" stroke="#c98a8a" stroke-width="0.800"/><rect x="53.20" y="11.80" width="11.200" height="6.800" fill="#1c0506" stroke="#c98a8a" stroke-width="0.800"/><rect x="75.10" y="11.80" width="11.200" height="6.800" fill="#1c0506" stroke="#c98a8a" stroke-width="0.800"/><rect x="97.20" y="11.80" width="11.200" height="6.800" fill="#1c0506" stroke="#c98a8a" stroke-width="0.800"/><rect x="131.40" y="11.80" width="11.200" height="6.800" fill="#1c0506" stroke="#c98a8a" stroke-width="0.800"/><rect x="153.50" y="11.80" width="11.200" height="6.800" fill="#1c0506" stroke="#c98a8a" stroke-width="0.800"/><rect x="175.40" y="11.80" width="11.200" height="6.800" fill="#1c0506" stroke="#c98a8a" stroke-width="0.800"/><rect x="197.20" y="11.80" width="11.200" height="6.800" fill="#1c0506" stroke="#c98a8a" stroke-width="0.800"/><rect x="8.00" y="28.70" width="11.200" height="6.800" fill="#1c0506" stroke="#c98a8a" stroke-width="0.800"/><rect x="8.00" y="44.10" width="11.200" height="6.800" fill="#1c0506" stroke="#c98a8a" stroke-width="0.800"/><rect x="8.00" y="59.50" width="11.200" height="6.800" fill="#1c0506" stroke="#c98a8a" stroke-width="0.800"/><rect x="8.00" y="74.80" width="11.200" height="6.800" fill="#1c0506" stroke="#c98a8a" stroke-width="0.800"/><rect x="8.00" y="90.20" width="11.200" height="6.800" fill="#1c0506" stroke="#c98a8a" stroke-width="0.800"/><rect x="8.00" y="105.50" width="11.200" height="6.800" fill="#1c0506" stroke="#c98a8a" stroke-width="0.800"/><rect x="8.00" y="120.90" width="11.200" height="6.800" fill="#1c0506" stroke="#c98a8a" stroke-width="0.800"/><rect x="8.00" y="136.30" width="11.200" height="6.800" fill="#1c0506" stroke="#c98a8a" stroke-width="0.800"/><rect x="31.10" y="28.70" width="11.200" height="6.800" fill="none" stroke="#b55a5c" stroke-width="0.900"/><rect x="30.30" y="28.40" width="12.800" height="7.200" rx="3.200" ry="3" fill="#2a0b0d" transform="rotate(-5 36.70 32.10)"/><rect x="53.20" y="28.70" width="11.200" height="6.800" fill="#cbd5d0" stroke="#a84a4d" stroke-width="1"/><text x="58.80" y="33.80" font-size="4.800" text-anchor="middle" font-weight="bold" fill="#7a8783" font-family="Liberation Sans, sans-serif">B</text><rect x="75.10" y="28.70" width="11.200" height="6.800" fill="#cbd5d0" stroke="#a84a4d" stroke-width="1"/><text x="80.70" y="33.80" font-size="4.800" text-anchor="middle" font-weight="bold" fill="#7a8783" font-family="Liberation Sans, sans-serif">C</text><rect x="97.20" y="28.70" width="11.200" height="6.800" fill="#cbd5d0" stroke="#a84a4d" stroke-width="1"/><text x="102.80" y="33.80" font-size="4.800" text-anchor="middle" font-weight="bold" fill="#7a8783" font-family="Liberation Sans, sans-serif">D</text><rect x="131.40" y="28.70" width="11.200" height="6.800" fill="none" stroke="#b55a5c" stroke-width="0.900"/><rect x="130.60" y="28.40" width="12.800" height="7.200" rx="3.200" ry="3" fill="#2a0b0d" transform="rotate(-5 137.00 32.10)"/><rect x="153.50" y="28.70" width="11.200" height="6.800" fill="#cbd5d0" stroke="#a84a4d" stroke-width="1"/><text x="159.10" y="33.80" font-size="4.800" text-anchor="middle" font-weight="bold" fill="#7a8783" font-family="Liberation Sans, sans-serif">B</text><rect x="175.40" y="28.70" width="11.200" height="6.800" fill="#cbd5d0" stroke="#a84a4d" stroke-width="1"/><text x="181.00" y="33.80" font-size="4.800" text-anchor="middle" font-weight="bold" fill="#7a8783" font-family="Liberation Sans, sans-serif">C</text><rect x="197.20" y="28.70" width="11.200" height="6.800" fill="#cbd5d0" stroke="#a84a4d" stroke-width="1"/><text x="202.80" y="33.80" font-size="4.800" text-anchor="middle" font-weight="bold" fill="#7a8783" font-family="Liberation Sans, sans-serif">D</text><text x="24.90" y="34.00" font-size="5.200" font-weight="bold" fill="#35584e" font-family="Liberation Sans, sans-serif">1</text><text x="125.10" y="34.00" font-size="5.200" font-weight="bold" fill="#35584e" font-family="Liberation Sans, sans-serif">2</text><rect x="31.10" y="44.10" width="11.200" height="6.800" fill="#cbd5d0" stroke="#a84a4d" stroke-width="1"/><text x="36.70" y="49.20" font-size="4.800" text-anchor="middle" font-weight="bold" fill="#7a8783" font-family="Liberation Sans, sans-serif">A</text><rect x="53.20" y="44.10" width="11.200" height="6.800" fill="#cbd5d0" stroke="#a84a4d" stroke-width="1"/><text x="58.80" y="49.20" font-size="4.800" text-anchor="middle" font-weight="bold" fill="#7a8783" font-family="Liberation Sans, sans-serif">B</text><rect x="75.10" y="44.10" width="11.200" height="6.800" fill="none" stroke="#b55a5c" stroke-width="0.900"/><rect x="74.30" y="43.80" width="12.800" height="7.200" rx="3.200" ry="3" fill="#2a0b0d" transform="rotate(-5 80.70 47.50)"/><rect x="97.20" y="44.10" width="11.200" height="6.800" fill="#cbd5d0" stroke="#a84a4d" stroke-width="1"/><text x="102.80" y="49.20" font-size="4.800" text-anchor="middle" font-weight="bold" fill="#7a8783" font-family="Liberation Sans, sans-serif">D</text><rect x="131.40" y="44.10" width="11.200" height="6.800" fill="#cbd5d0" stroke="#a84a4d" stroke-width="1"/><text x="137.00" y="49.20" font-size="4.800" text-anchor="middle" font-weight="bold" fill="#7a8783" font-family="Liberation Sans, sans-serif">A</text><rect x="153.50" y="44.10" width="11.200" height="6.800" fill="none" stroke="#b55a5c" stroke-width="0.900"/><rect x="152.70" y="43.80" width="12.800" height="7.200" rx="3.200" ry="3" fill="#2a0b0d" transform="rotate(-5 159.10 47.50)"/><rect x="175.40" y="44.10" width="11.200" height="6.800" fill="#cbd5d0" stroke="#a84a4d" stroke-width="1"/><text x="181.00" y="49.20" font-size="4.800" text-anchor="middle" font-weight="bold" fill="#7a8783" font-family="Liberation Sans, sans-serif">C</text><rect x="197.20" y="44.10" width="11.200" height="6.800" fill="#cbd5d0" stroke="#a84a4d" stroke-width="1"/><text x="202.80" y="49.20" font-size="4.800" text-anchor="middle" font-weight="bold" fill="#7a8783" font-family="Liberation Sans, sans-serif">D</text><text x="24.90" y="49.40" font-size="5.200" font-weight="bold" fill="#35584e" font-family="Liberation Sans, sans-serif">3</text><text x="125.10" y="49.40" font-size="5.200" font-weight="bold" fill="#35584e" font-family="Liberation Sans, sans-serif">4</text><rect x="31.10" y="59.50" width="11.200" height="6.800" fill="#cbd5d0" stroke="#a84a4d" stroke-width="1"/><text x="36.70" y="64.60" font-size="4.800" text-anchor="middle" font-weight="bold" fill="#7a8783" font-family="Liberation Sans, sans-serif">A</text><rect x="53.20" y="59.50" width="11.200" height="6.800" fill="none" stroke="#b55a5c" stroke-width="0.900"/><rect x="52.40" y="59.20" width="12.800" height="7.200" rx="3.200" ry="3" fill="#2a0b0d" transform="rotate(-5 58.80 62.90)"/><rect x="75.10" y="59.50" width="11.200" height="6.800" fill="#cbd5d0" stroke="#a84a4d" stroke-width="1"/><text x="80.70" y="64.60" font-size="4.800" text-anchor="middle" font-weight="bold" fill="#7a8783" font-family="Liberation Sans, sans-serif">C</text><rect x="97.20" y="59.50" width="11.200" height="6.800" fill="#cbd5d0" stroke="#a84a4d" stroke-width="1"/><text x="102.80" y="64.60" font-size="4.800" text-anchor="middle" font-weight="bold" fill="#7a8783" font-family="Liberation Sans, sans-serif">D</text><rect x="131.40" y="59.50" width="11.200" height="6.800" fill="#cbd5d0" stroke="#a84a4d" stroke-width="1"/><text x="137.00" y="64.60" font-size="4.800" text-anchor="middle" font-weight="bold" fill="#7a8783" font-family="Liberation Sans, sans-serif">A</text><rect x="153.50" y="59.50" width="11.200" height="6.800" fill="#cbd5d0" stroke="#a84a4d" stroke-width="1"/><text x="159.10" y="64.60" font-size="4.800" text-anchor="middle" font-weight="bold" fill="#7a8783" font-family="Liberation Sans, sans-serif">B</text><rect x="175.40" y="59.50" width="11.200" height="6.800" fill="#cbd5d0" stroke="#a84a4d" stroke-width="1"/><text x="181.00" y="64.60" font-size="4.800" text-anchor="middle" font-weight="bold" fill="#7a8783" font-family="Liberation Sans, sans-serif">C</text><rect x="197.20" y="59.50" width="11.200" height="6.800" fill="#cbd5d0" stroke="#a84a4d" stroke-width="1"/><text x="202.80" y="64.60" font-size="4.800" text-anchor="middle" font-weight="bold" fill="#7a8783" font-family="Liberation Sans, sans-serif">D</text><text x="24.90" y="64.80" font-size="5.200" font-weight="bold" fill="#35584e" font-family="Liberation Sans, sans-serif">5</text><text x="125.10" y="64.80" font-size="5.200" font-weight="bold" fill="#35584e" font-family="Liberation Sans, sans-serif">6</text><rect x="31.10" y="74.80" width="11.200" height="6.800" fill="#cbd5d0" stroke="#a84a4d" stroke-width="1"/><text x="36.70" y="79.90" font-size="4.800" text-anchor="middle" font-weight="bold" fill="#7a8783" font-family="Liberation Sans, sans-serif">A</text><rect x="53.20" y="74.80" width="11.200" height="6.800" fill="#cbd5d0" stroke="#a84a4d" stroke-width="1"/><text x="58.80" y="79.90" font-size="4.800" text-anchor="middle" font-weight="bold" fill="#7a8783" font-family="Liberation Sans, sans-serif">B</text><rect x="75.10" y="74.80" width="11.200" height="6.800" fill="none" stroke="#b55a5c" stroke-width="0.900"/><rect x="74.30" y="74.50" width="12.800" height="7.200" rx="3.200" ry="3" fill="#2a0b0d" transform="rotate(-5 80.70 78.20)"/><rect x="97.20" y="74.80" width="11.200" height="6.800" fill="#cbd5d0" stroke="#a84a4d" stroke-width="1"/><text x="102.80" y="79.90" font-size="4.800" text-anchor="middle" font-weight="bold" fill="#7a8783" font-family="Liberation Sans, sans-serif">D</text><rect x="131.40" y="74.80" width="11.200" height="6.800" fill="#cbd5d0" stroke="#a84a4d" stroke-width="1"/><text x="137.00" y="79.90" font-size="4.800" text-anchor="middle" font-weight="bold" fill="#7a8783" font-family="Liberation Sans, sans-serif">A</text><rect x="153.50" y="74.80" width="11.200" height="6.800" fill="none" stroke="#b55a5c" stroke-width="0.900"/><rect x="152.70" y="74.50" width="12.800" height="7.200" rx="3.200" ry="3" fill="#2a0b0d" transform="rotate(-5 159.10 78.20)"/><rect x="175.40" y="74.80" width="11.200" height="6.800" fill="#cbd5d0" stroke="#a84a4d" stroke-width="1"/><text x="181.00" y="79.90" font-size="4.800" text-anchor="middle" font-weight="bold" fill="#7a8783" font-family="Liberation Sans, sans-serif">C</text><rect x="197.20" y="74.80" width="11.200" height="6.800" fill="#cbd5d0" stroke="#a84a4d" stroke-width="1"/><text x="202.80" y="79.90" font-size="4.800" text-anchor="middle" font-weight="bold" fill="#7a8783" font-family="Liberation Sans, sans-serif">D</text><text x="24.90" y="80.10" font-size="5.200" font-weight="bold" fill="#35584e" font-family="Liberation Sans, sans-serif">7</text><text x="125.10" y="80.10" font-size="5.200" font-weight="bold" fill="#35584e" font-family="Liberation Sans, sans-serif">8</text><rect x="31.10" y="90.20" width="11.200" height="6.800" fill="none" stroke="#b55a5c" stroke-width="0.900"/><rect x="30.30" y="89.90" width="12.800" height="7.200" rx="3.200" ry="3" fill="#2a0b0d" transform="rotate(-5 36.70 93.60)"/><rect x="53.20" y="90.20" width="11.200" height="6.800" fill="#cbd5d0" stroke="#a84a4d" stroke-width="1"/><text x="58.80" y="95.30" font-size="4.800" text-anchor="middle" font-weight="bold" fill="#7a8783" font-family="Liberation Sans, sans-serif">B</text><rect x="75.10" y="90.20" width="11.200" height="6.800" fill="#cbd5d0" stroke="#a84a4d" stroke-width="1"/><text x="80.70" y="95.30" font-size="4.800" text-anchor="middle" font-weight="bold" fill="#7a8783" font-family="Liberation Sans, sans-serif">C</text><rect x="97.20" y="90.20" width="11.200" height="6.800" fill="#cbd5d0" stroke="#a84a4d" stroke-width="1"/><text x="102.80" y="95.30" font-size="4.800" text-anchor="middle" font-weight="bold" fill="#7a8783" font-family="Liberation Sans, sans-serif">D</text><rect x="131.40" y="90.20" width="11.200" height="6.800" fill="none" stroke="#b55a5c" stroke-width="0.900"/><rect x="130.60" y="89.90" width="12.800" height="7.200" rx="3.200" ry="3" fill="#2a0b0d" transform="rotate(-5 137.00 93.60)"/><rect x="153.50" y="90.20" width="11.200" height="6.800" fill="#cbd5d0" stroke="#a84a4d" stroke-width="1"/><text x="159.10" y="95.30" font-size="4.800" text-anchor="middle" font-weight="bold" fill="#7a8783" font-family="Liberation Sans, sans-serif">B</text><rect x="175.40" y="90.20" width="11.200" height="6.800" fill="#cbd5d0" stroke="#a84a4d" stroke-width="1"/><text x="181.00" y="95.30" font-size="4.800" text-anchor="middle" font-weight="bold" fill="#7a8783" font-family="Liberation Sans, sans-serif">C</text><rect x="197.20" y="90.20" width="11.200" height="6.800" fill="#cbd5d0" stroke="#a84a4d" stroke-width="1"/><text x="202.80" y="95.30" font-size="4.800" text-anchor="middle" font-weight="bold" fill="#7a8783" font-family="Liberation Sans, sans-serif">D</text><text x="24.90" y="95.50" font-size="5.200" font-weight="bold" fill="#35584e" font-family="Liberation Sans, sans-serif">9</text><text x="125.10" y="95.50" font-size="5.200" font-weight="bold" fill="#35584e" font-family="Liberation Sans, sans-serif">10</text><rect x="31.10" y="105.50" width="11.200" height="6.800" fill="#cbd5d0" stroke="#a84a4d" stroke-width="1"/><text x="36.70" y="110.60" font-size="4.800" text-anchor="middle" font-weight="bold" fill="#7a8783" font-family="Liberation Sans, sans-serif">A</text><rect x="53.20" y="105.50" width="11.200" height="6.800" fill="#cbd5d0" stroke="#a84a4d" stroke-width="1"/><text x="58.80" y="110.60" font-size="4.800" text-anchor="middle" font-weight="bold" fill="#7a8783" font-family="Liberation Sans, sans-serif">B</text><rect x="75.10" y="105.50" width="11.200" height="6.800" fill="#cbd5d0" stroke="#a84a4d" stroke-width="1"/><text x="80.70" y="110.60" font-size="4.800" text-anchor="middle" font-weight="bold" fill="#7a8783" font-family="Liberation Sans, sans-serif">C</text><rect x="97.20" y="105.50" width="11.200" height="6.800" fill="#cbd5d0" stroke="#a84a4d" stroke-width="1"/><text x="102.80" y="110.60" font-size="4.800" text-anchor="middle" font-weight="bold" fill="#7a8783" font-family="Liberation Sans, sans-serif">D</text><rect x="131.40" y="105.50" width="11.200" height="6.800" fill="none" stroke="#b55a5c" stroke-width="0.900"/><rect x="130.60" y="105.20" width="12.800" height="7.200" rx="3.200" ry="3" fill="#2a0b0d" transform="rotate(-5 137.00 108.90)"/><rect x="153.50" y="105.50" width="11.200" height="6.800" fill="#cbd5d0" stroke="#a84a4d" stroke-width="1"/><text x="159.10" y="110.60" font-size="4.800" text-anchor="middle" font-weight="bold" fill="#7a8783" font-family="Liberation Sans, sans-serif">B</text><rect x="175.40" y="105.50" width="11.200" height="6.800" fill="#cbd5d0" stroke="#a84a4d" stroke-width="1"/><text x="181.00" y="110.60" font-size="4.800" text-anchor="middle" font-weight="bold" fill="#7a8783" font-family="Liberation Sans, sans-serif">C</text><rect x="197.20" y="105.50" width="11.200" height="6.800" fill="#cbd5d0" stroke="#a84a4d" stroke-width="1"/><text x="202.80" y="110.60" font-size="4.800" text-anchor="middle" font-weight="bold" fill="#7a8783" font-family="Liberation Sans, sans-serif">D</text><text x="24.90" y="110.80" font-size="5.200" font-weight="bold" fill="#35584e" font-family="Liberation Sans, sans-serif">11</text><text x="125.10" y="110.80" font-size="5.200" font-weight="bold" fill="#35584e" font-family="Liberation Sans, sans-serif">12</text><rect x="31.10" y="120.90" width="11.200" height="6.800" fill="none" stroke="#b55a5c" stroke-width="0.900"/><rect x="30.30" y="120.60" width="12.800" height="7.200" rx="3.200" ry="3" fill="#2a0b0d" transform="rotate(-5 36.70 124.30)"/><rect x="53.20" y="120.90" width="11.200" height="6.800" fill="#cbd5d0" stroke="#a84a4d" stroke-width="1"/><text x="58.80" y="126.00" font-size="4.800" text-anchor="middle" font-weight="bold" fill="#7a8783" font-family="Liberation Sans, sans-serif">B</text><rect x="75.10" y="120.90" width="11.200" height="6.800" fill="#cbd5d0" stroke="#a84a4d" stroke-width="1"/><text x="80.70" y="126.00" font-size="4.800" text-anchor="middle" font-weight="bold" fill="#7a8783" font-family="Liberation Sans, sans-serif">C</text><rect x="97.20" y="120.90" width="11.200" height="6.800" fill="#cbd5d0" stroke="#a84a4d" stroke-width="1"/><text x="102.80" y="126.00" font-size="4.800" text-anchor="middle" font-weight="bold" fill="#7a8783" font-family="Liberation Sans, sans-serif">D</text><rect x="131.40" y="120.90" width="11.200" height="6.800" fill="#cbd5d0" stroke="#a84a4d" stroke-width="1"/><text x="137.00" y="126.00" font-size="4.800" text-anchor="middle" font-weight="bold" fill="#7a8783" font-family="Liberation Sans, sans-serif">A</text><rect x="153.50" y="120.90" width="11.200" height="6.800" fill="#cbd5d0" stroke="#a84a4d" stroke-width="1"/><text x="159.10" y="126.00" font-size="4.800" text-anchor="middle" font-weight="bold" fill="#7a8783" font-family="Liberation Sans, sans-serif">B</text><rect x="175.40" y="120.90" width="11.200" height="6.800" fill="#cbd5d0" stroke="#a84a4d" stroke-width="1"/><text x="181.00" y="126.00" font-size="4.800" text-anchor="middle" font-weight="bold" fill="#7a8783" font-family="Liberation Sans, sans-serif">C</text><rect x="197.20" y="120.90" width="11.200" height="6.800" fill="#cbd5d0" stroke="#a84a4d" stroke-width="1"/><text x="202.80" y="126.00" font-size="4.800" text-anchor="middle" font-weight="bold" fill="#7a8783" font-family="Liberation Sans, sans-serif">D</text><text x="24.90" y="126.20" font-size="5.200" font-weight="bold" fill="#35584e" font-family="Liberation Sans, sans-serif">13</text><text x="125.10" y="126.20" font-size="5.200" font-weight="bold" fill="#35584e" font-family="Liberation Sans, sans-serif">14</text><rect x="31.10" y="136.30" width="11.200" height="6.800" fill="#cbd5d0" stroke="#a84a4d" stroke-width="1"/><text x="36.70" y="141.40" font-size="4.800" text-anchor="middle" font-weight="bold" fill="#7a8783" font-family="Liberation Sans, sans-serif">A</text><rect x="53.20" y="136.30" width="11.200" height="6.800" fill="#cbd5d0" stroke="#a84a4d" stroke-width="1"/><text x="58.80" y="141.40" font-size="4.800" text-anchor="middle" font-weight="bold" fill="#7a8783" font-family="Liberation Sans, sans-serif">B</text><rect x="75.10" y="136.30" width="11.200" height="6.800" fill="#cbd5d0" stroke="#a84a4d" stroke-width="1"/><text x="80.70" y="141.40" font-size="4.800" text-anchor="middle" font-weight="bold" fill="#7a8783" font-family="Liberation Sans, sans-serif">C</text><rect x="97.20" y="136.30" width="11.200" height="6.800" fill="#cbd5d0" stroke="#a84a4d" stroke-width="1"/><text x="102.80" y="141.40" font-size="4.800" text-anchor="middle" font-weight="bold" fill="#7a8783" font-family="Liberation Sans, sans-serif">D</text><rect x="131.40" y="136.30" width="11.200" height="6.800" fill="#cbd5d0" stroke="#a84a4d" stroke-width="1"/><text x="137.00" y="141.40" font-size="4.800" text-anchor="middle" font-weight="bold" fill="#7a8783" font-family="Liberation Sans, sans-serif">A</text><rect x="153.50" y="136.30" width="11.200" height="6.800" fill="#cbd5d0" stroke="#a84a4d" stroke-width="1"/><text x="159.10" y="141.40" font-size="4.800" text-anchor="middle" font-weight="bold" fill="#7a8783" font-family="Liberation Sans, sans-serif">B</text><rect x="175.40" y="136.30" width="11.200" height="6.800" fill="#cbd5d0" stroke="#a84a4d" stroke-width="1"/><text x="181.00" y="141.40" font-size="4.800" text-anchor="middle" font-weight="bold" fill="#7a8783" font-family="Liberation Sans, sans-serif">C</text><rect x="197.20" y="136.30" width="11.200" height="6.800" fill="#cbd5d0" stroke="#a84a4d" stroke-width="1"/><text x="202.80" y="141.40" font-size="4.800" text-anchor="middle" font-weight="bold" fill="#7a8783" font-family="Liberation Sans, sans-serif">D</text><text x="24.90" y="141.60" font-size="5.200" font-weight="bold" fill="#35584e" font-family="Liberation Sans, sans-serif">15</text><text x="125.10" y="141.60" font-size="5.200" font-weight="bold" fill="#35584e" font-family="Liberation Sans, sans-serif">16</text></svg>
<div class="t" style="left:537px;top:150.0px;font-size:7.2px;color:#444;-webkit-text-stroke:0;">1 A</div>
<div class="t" style="left:570px;top:150.0px;font-size:7.2px;color:#444;-webkit-text-stroke:0;">2 A</div>
<div class="t" style="left:537px;top:159.31px;font-size:7.2px;color:#444;-webkit-text-stroke:0;">3 C</div>
<div class="t" style="left:570px;top:159.31px;font-size:7.2px;color:#444;-webkit-text-stroke:0;">4 B</div>
<div class="t" style="left:537px;top:168.62px;font-size:7.2px;color:#444;-webkit-text-stroke:0;">5 B</div>
<div class="t" style="left:570px;top:168.62px;font-size:7.2px;color:#444;-webkit-text-stroke:0;">6 NULL</div>
<div class="t" style="left:537px;top:177.93px;font-size:7.2px;color:#444;-webkit-text-stroke:0;">7 C</div>
<div class="t" style="left:570px;top:177.93px;font-size:7.2px;color:#444;-webkit-text-stroke:0;">8 B</div>
<div class="t" style="left:537px;top:187.24px;font-size:7.2px;color:#444;-webkit-text-stroke:0;">9 A</div>
<div class="t" style="left:570px;top:187.24px;font-size:7.2px;color:#444;-webkit-text-stroke:0;">10 A</div>
<div class="t" style="left:537px;top:196.55px;font-size:7.2px;color:#444;-webkit-text-stroke:0;">11 NULL</div>
<div class="t" style="left:570px;top:196.55px;font-size:7.2px;color:#444;-webkit-text-stroke:0;">12 A</div>
<div class="t" style="left:537px;top:205.86px;font-size:7.2px;color:#444;-webkit-text-stroke:0;">13 A</div>
<div class="t" style="left:570px;top:205.86px;font-size:7.2px;color:#444;-webkit-text-stroke:0;">14 NULL</div>
<div class="t" style="left:537px;top:215.17000000000002px;font-size:7.2px;color:#444;-webkit-text-stroke:0;">15 NULL</div>
<div class="t" style="left:570px;top:215.17000000000002px;font-size:7.2px;color:#444;-webkit-text-stroke:0;">16 NULL</div>
<div class="t" style="left:421px;top:428.5px;font-size:7px;color:#4a4a4a;font-family:'Liberation Sans','Noto Sans CJK SC',sans-serif;letter-spacing:-0.026px;-webkit-text-stroke:0;">结果保存至:</div>
<div class="abs" style="left:465.7px;top:428.3px;width:86.3px;height:12px;background:#fefefe;border-radius:1px;border:1px solid #c6cacc;"></div>
<div class="t" style="left:467.8px;top:428.9px;font-size:7.2px;color:#333;letter-spacing:0.095px;-webkit-text-stroke:0;">result.xlsx</div>
<div class="abs" style="left:558.6px;top:428px;width:18.7px;height:14px;background:#3f7fd9;border-radius:1.5px;"></div>
<div class="t" style="left:560.8px;top:428.6px;font-size:7px;color:#e8eefa;font-family:'Liberation Sans','Noto Sans CJK SC',sans-serif;-webkit-text-stroke:0;">保存</div>
<svg style="left:568.5px;top:432.5px" width="8" height="10" viewBox="0 0 8 10"><path d="M1 0.500v7.500l1.900-1.700 1.300 2.900 1.300-.6-1.300-2.800h2.500z" fill="#fff" stroke="#1a1a1a" stroke-width="0.700" stroke-linejoin="round"/></svg>
</div>
<div id="soft"></div>
</body></html>
